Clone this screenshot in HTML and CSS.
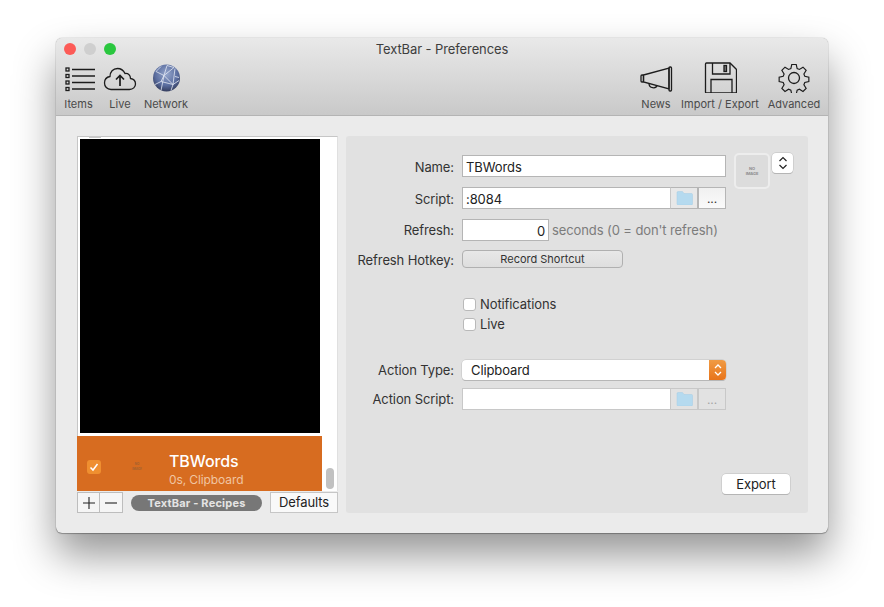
FILE: index.html
```html
<!DOCTYPE html>
<html lang="en">

<head>
  <meta charset="UTF-8">
  <title>TextBar - Preferences</title>
  <link rel="stylesheet" href="styles.css">
</head>

<body>
  <div class="window">
    <header class="toolbar">
      <div class="titlebar">
        <div class="lights">
          <span class="light light-red"></span>
          <span class="light light-grey"></span>
          <span class="light light-green"></span>
        </div>
        <div class="title">TextBar - Preferences</div>
      </div>
      <div class="tools">
        <div class="tool-group">
          <div class="tool tool-items">
            <svg width="32" height="32" viewBox="-1 -3.500 32 32" fill="none" stroke="#1c1c1c">
              <rect x="2" y="3.500" width="3" height="3" stroke-width="1.300" />
              <rect x="2" y="10" width="3" height="3" stroke-width="1.300" />
              <rect x="2" y="16.500" width="3" height="3" stroke-width="1.300" />
              <rect x="2" y="23" width="3" height="3" stroke-width="1.300" />
              <path d="M8 5h23M8 11.500h23M8 18h23M8 24.500h23" stroke-width="1.300" />
            </svg>
            <span>Items</span>
          </div>
          <div class="tool tool-live">
            <svg width="34" height="32" viewBox="0 -4 34 32" fill="none" stroke="#1c1c1c" stroke-width="1.300">
              <path d="M8 24.500h18.500c3.500 0 6-2.500 6-5.500 0-3-2-5-5-5.500 0-3.500-2.500-5.500-5.500-5-1.500-3-4-5-7.500-5-4.500 0-7.500 3.500-7.500 8-3 .5-5.500 3-5.500 6.500 0 3.500 2.500 6.500 6.500 6.500z" />
              <path d="M17 21v-10M13 14.500l4-4 4 4" stroke-width="1.700" />
            </svg>
            <span>Live</span>
          </div>
          <div class="tool tool-network">
            <svg width="28" height="32" viewBox="-1 -3.500 28 32" fill="none">
              <defs>
                <radialGradient id="globe" cx="0.5" cy="0.35" r="0.7">
                  <stop offset="0" stop-color="#95a6cc" />
                  <stop offset="0.6" stop-color="#5a6d9f" />
                  <stop offset="1" stop-color="#2c3350" />
                </radialGradient>
              </defs>
              <circle cx="13.500" cy="13.500" r="13.500" fill="url(#globe)" />
              <path d="M3 7l8 4 10-8M11 11l-3 15M11 11l9 9 6-4M2 20l6-3 12 3-2 6M8 17l3-6M20 20l2-16M11 11l3-10M21 3l-7-2M3 7l5-5M22 12l4 1" stroke="#e3e8f4" stroke-width="0.800" />
            </svg>
            <span>Network</span>
          </div>
        </div>
        <div class="tool-group">
          <div class="tool tool-news">
            <svg width="34" height="32" viewBox="-1 -4 34 32" fill="none" stroke="#1c1c1c" stroke-width="1.300">
              <path d="M3.500 10L29 3v21L3.500 17z" />
              <rect x="1" y="10" width="2.500" height="7" rx="1" />
              <rect x="29" y="2" width="2.500" height="24" rx="1" />
              <path d="M9 18.500c0 5 7 5.500 8 2" />
            </svg>
            <span>News</span>
          </div>
          <div class="tool tool-export">
            <svg width="34" height="32" viewBox="-1 -1 34 32" fill="none" stroke="#1c1c1c" stroke-width="1.300">
              <path d="M2.500 1h23.500l6.500 6.500v22.500c0 .5-.5 1-1 1h-29c-.5 0-1-.5-1-1v-28c0-.5.500-1 1-1z" />
              <path d="M8.500 1v11h17.500v-11M7 31v-13.500h21v13.500" />
              <rect x="20" y="3.500" width="2.500" height="6" fill="#777" />
            </svg>
            <span>Import / Export</span>
          </div>
          <div class="tool tool-advanced">
            <svg width="34" height="32" viewBox="0 -1 34 32" fill="none" stroke="#1c1c1c" stroke-width="1.300">
              <circle cx="17" cy="16" r="5.500" />
              <path d="M14.500 1h5l1 4.500 2.500 1 4-2.500 3.500 3.500-2.500 4 1 2.500 4.500 1v5l-4.500 1-1 2.500 2.500 4-3.500 3.500-4-2.500-2.500 1-1 4.500h-5l-1-4.500-2.500-1-4 2.500-3.500-3.500 2.500-4-1-2.500-4.500-1v-5l4.500-1 1-2.500-2.500-4 3.500-3.500 4 2.500 2.500-1z" transform="translate(1.700 1.600) scale(0.9)" />
            </svg>
            <span>Advanced</span>
          </div>
        </div>
      </div>
    </header>

    <main class="content">
      <section class="sidebar">
        <div class="list">
          <div class="list-rows">
            <div class="list-peek"></div>
            <div class="black-frame"></div>
            <div class="recipe">
              <span class="recipe-check">
                <svg width="10" height="9" viewBox="0 0 10 9" fill="none" stroke="#fff" stroke-width="1.500">
                  <path d="M1.500 4.500l2.500 2.500 4.500-6" />
                </svg>
              </span>
              <span class="recipe-image">NO<br>IMAGE</span>
              <div class="recipe-text">
                <div class="recipe-name">TBWords</div>
                <div class="recipe-sub">0s, Clipboard</div>
              </div>
            </div>
          </div>
          <div class="scroll-track"><span class="scroll-thumb"></span></div>
        </div>
        <div class="list-bar">
          <div class="plus-minus">
            <span class="pm-btn">
              <svg width="12" height="12" viewBox="0 0 12 12" stroke="#222" stroke-width="1.100"><path d="M6 0v12M0 6h12" /></svg>
            </span>
            <span class="pm-btn">
              <svg width="12" height="12" viewBox="0 0 12 12" stroke="#222" stroke-width="1.100"><path d="M0 6h12" /></svg>
            </span>
          </div>
          <span class="recipes-pill">TextBar - Recipes</span>
          <span class="defaults-btn">Defaults</span>
        </div>
      </section>

      <section class="panel">
        <div class="image-well">
          <span class="well-inner">NO<br>IMAGE</span>
        </div>
        <span class="image-stepper">
          <svg width="10" height="14" viewBox="0 0 10 14" fill="none" stroke="#222" stroke-width="1.200"><path d="M1.500 5l3.500-3.500 3.500 3.500M1.500 9l3.500 3.500 3.500-3.500" /></svg>
        </span>

        <div class="form">
          <label class="form-label row-name">Name:</label>
          <div class="field field-wide row-name">TBWords</div>

          <label class="form-label row-script">Script:</label>
          <div class="field-group row-script">
            <div class="field field-grow">:8084</div>
            <span class="addon">
              <svg class="folder" width="17" height="14" viewBox="0 0 17 14"><path d="M1 13V1.500C1 1 1.500.5 2 .5h4.500l1.500 2h7.500c.5 0 1 .5 1 1V13c0 .5-.5 1-1 1H2c-.5 0-1-.5-1-1z" fill="#b5daef" stroke="#a5cde4" stroke-width="0.500" /></svg>
            </span>
            <span class="addon addon-dots">...</span>
          </div>

          <label class="form-label row-refresh">Refresh:</label>
          <div class="refresh-line row-refresh">
            <div class="field field-number">0</div>
            <span class="hint">seconds (0 = don't refresh)</span>
          </div>

          <label class="form-label row-hotkey">Refresh Hotkey:</label>
          <div class="shortcut-btn row-hotkey">Record Shortcut</div>

          <div class="checks">
            <div class="check-line"><span class="check"></span>Notifications</div>
            <div class="check-line"><span class="check"></span>Live</div>
          </div>

          <label class="form-label row-action">Action Type:</label>
          <div class="select row-action">
            <span class="select-value">Clipboard</span>
            <span class="select-arrows">
              <svg width="10" height="14" viewBox="0 0 10 14" fill="none" stroke="#fff" stroke-width="1.300"><path d="M2 5l3-3 3 3M2 9l3 3 3-3" /></svg>
            </span>
          </div>

          <label class="form-label row-ascript">Action Script:</label>
          <div class="field-group field-group-off row-ascript">
            <div class="field field-grow"></div>
            <span class="addon">
              <svg class="folder" width="17" height="14" viewBox="0 0 17 14"><path d="M1 13V1.500C1 1 1.500.5 2 .5h4.500l1.500 2h7.500c.5 0 1 .5 1 1V13c0 .5-.5 1-1 1H2c-.5 0-1-.5-1-1z" fill="#b5daef" stroke="#a5cde4" stroke-width="0.500" /></svg>
            </span>
            <span class="addon addon-dots">...</span>
          </div>
        </div>

        <div class="panel-foot">
          <span class="export-btn">Export</span>
        </div>
      </section>
    </main>
  </div>
</body>

</html>
```

FILE: styles.css
```css
* {
  box-sizing: border-box;
}

html,
body {
  margin: 0;
  height: 607px;
  overflow: hidden;
  background: #ffffff;
}

body {
  padding: 38px 56px 0;
  font-family: Inter, Roboto, "Liberation Sans", sans-serif;
  font-size: 13px;
  letter-spacing: -0.1px;
  color: #2a2a2a;
}

.window {
  position: relative;
  width: 772px;
  height: 495px;
  display: flex;
  flex-direction: column;
  border-radius: 6px;
  background: #ebebeb;
  box-shadow: 0 0 1px rgba(0, 0, 0, 0.55), 0 1px 1px rgba(0, 0, 0, 0.25), 0 22px 42px rgba(0, 0, 0, 0.42);
}

/* Toolbar */
.toolbar {
  height: 78px;
  flex: none;
  border-radius: 6px 6px 0 0;
  border-bottom: 1px solid #b4b4b4;
  background: linear-gradient(#e9e9e9, #c9c9c9);
}

.titlebar {
  position: relative;
  height: 23px;
  display: flex;
  align-items: center;
  justify-content: center;
  padding-bottom: 2px;
}

.lights {
  position: absolute;
  left: 8px;
  top: 5px;
  display: flex;
  gap: 8px;
}

.light {
  width: 12px;
  height: 12px;
  border-radius: 50%;
}

.light-red {
  background: #fc5b57;
}

.light-grey {
  background: #cfcfcf;
}

.light-green {
  background: #2ac73f;
}

.title {
  font-size: 13px;
  color: #3e3e3e;
}

.tools {
  display: flex;
  justify-content: space-between;
  padding: 0 8px;
}

.tool-group {
  display: flex;
}

.tool {
  display: flex;
  flex-direction: column;
  align-items: center;
  font-size: 11px;
  letter-spacing: 0;
  color: #4a4a4a;
}

.tool svg {
  flex: none;
  margin-bottom: 5px;
}

.tool span {
  line-height: 13px;
}

.tool-items {
  width: 29px;
}

.tool-live {
  width: 34px;
  margin-left: 10px;
}

.tool-network {
  width: 46px;
  margin-left: 6px;
}

.tool-news {
  width: 34px;
}

.tool-export {
  width: 80px;
  margin-left: 7px;
}

.tool-advanced {
  width: 52px;
  margin-left: 8px;
}

/* Body of the window */
.content {
  flex: 1;
  display: flex;
  gap: 8px;
  padding: 20px 20px 20px 21px;
}

.sidebar {
  width: 261px;
  display: flex;
  flex-direction: column;
}

.list {
  position: relative;
  height: 355px;
  display: flex;
  background: #ffffff;
  border-top: 1px solid #c6c6c6;
  border-left: 1px solid #c6c6c6;
  border-right: 1px solid #e0e0e0;
}

.list-rows {
  width: 245px;
  display: flex;
  flex-direction: column;
}

.list-peek {
  position: absolute;
  left: 11px;
  top: -1px;
  width: 12px;
  height: 2px;
  background: #c9c9c9;
}

.black-frame {
  height: 294px;
  margin: 2px 3px 0 2px;
  background: #000000;
}

.recipe {
  margin: 3px 1px 0 -1px;
  height: 55px;
  display: flex;
  align-items: center;
  background: #d76c20;
  color: #ffffff;
}

.recipe-check {
  width: 14px;
  height: 14px;
  margin: 7px 0 0 10px;
  border-radius: 3px;
  display: flex;
  align-items: center;
  justify-content: center;
  background: #ef8f30;
}

.recipe-image {
  width: 18px;
  margin: 7px 0 0 27px;
  font-size: 3px;
  line-height: 5px;
  font-weight: 700;
  text-align: center;
  color: #a5622f;
}

.recipe-text {
  margin-left: 23px;
  padding-top: 13px;
}

.recipe-name {
  font-size: 16px;
  font-weight: 500;
  line-height: 20px;
}

.recipe-sub {
  font-size: 12px;
  line-height: 18px;
  color: #f0c5a2;
}

.scroll-track {
  flex: 1;
  position: relative;
}

.scroll-thumb {
  position: absolute;
  left: 3px;
  bottom: 2px;
  width: 8px;
  height: 21px;
  border-radius: 4px;
  background: #c1c1c1;
}

.list-bar {
  height: 22px;
  display: flex;
  align-items: flex-end;
}

.plus-minus {
  display: flex;
  height: 21px;
  border: 1px solid #bdbdbd;
  background: #f5f5f5;
}

.pm-btn {
  width: 21px;
  display: flex;
  align-items: center;
  justify-content: center;
}

.pm-btn + .pm-btn {
  width: 23px;
  border-left: 1px solid #bdbdbd;
}

.recipes-pill {
  width: 131px;
  height: 16px;
  margin: 0 0 2px 8px;
  border-radius: 8px;
  background: #777777;
  color: #e4e4e4;
  font-size: 11px;
  font-weight: 700;
  letter-spacing: 0.2px;
  line-height: 16px;
  text-align: center;
}

.defaults-btn {
  width: 68px;
  height: 21px;
  margin-left: auto;
  border: 1px solid #c6c6c6;
  background: #f9f9f9;
  color: #222222;
  line-height: 19px;
  text-align: center;
}

/* Right panel */
.panel {
  position: relative;
  flex: 1;
  display: flex;
  flex-direction: column;
  padding: 19px 17px 19px 10px;
  border-radius: 3px;
  background: #e1e1e1;
}

.form {
  display: grid;
  grid-template-columns: 98px 264px;
  column-gap: 8px;
  align-items: center;
}

.form-label {
  text-align: right;
  color: #333333;
}

/* these labels sit a pixel under the middle of their row */
.form-label.row-name,
.form-label.row-script,
.form-label.row-hotkey {
  height: 18px;
  line-height: 20px;
}

.row-script {
  margin-top: 10px;
}

.row-refresh {
  margin-top: 10px;
}

.row-hotkey {
  margin-top: 9px;
}

.row-action {
  margin-top: 28px;
}

.row-ascript {
  margin-top: 8px;
}

.field {
  height: 22px;
  padding: 0 3px;
  border: 1px solid #b5b5b5;
  background: #ffffff;
  color: #222222;
  line-height: 22px;
}

.field-group {
  display: flex;
  height: 22px;
}

.field-grow {
  flex: 1;
  border-right: none;
}

.addon {
  width: 28px;
  display: flex;
  align-items: center;
  justify-content: center;
  border: 1px solid #b5b5b5;
  border-left: 1px solid #c8c8c8;
  background: #e8e8e8;
}

.addon-dots {
  border-left: 1px solid #b5b5b5;
  background: linear-gradient(#f0f0f0, #fafafa);
  color: #333333;
  font-size: 12px;
}

.field-group-off .field,
.field-group-off .addon {
  border-color: #c8c8c8;
}

.field-group-off .addon {
  background: #e2e2e2;
}

.field-group-off .addon-dots {
  color: #a5a5a5;
}

.refresh-line {
  display: flex;
  align-items: center;
  gap: 3px;
}

.field-number {
  width: 87px;
  text-align: right;
}

.hint {
  color: #7c7c7c;
  white-space: nowrap;
}

.shortcut-btn {
  width: 161px;
  height: 18px;
  border: 1px solid #b0b0b0;
  border-radius: 4px;
  background: linear-gradient(#e8e8e8, #dedede);
  color: #333333;
  font-size: 11px;
  letter-spacing: 0;
  line-height: 16px;
  text-align: center;
}

.checks {
  grid-column: 2;
  display: flex;
  flex-direction: column;
  gap: 6px;
  margin-top: 29px;
  margin-bottom: 1px;
}

.check-line {
  display: flex;
  align-items: center;
  gap: 4px;
  height: 14px;
  padding-left: 1px;
  color: #333333;
}

.check {
  width: 13px;
  height: 13px;
  border: 1px solid #b9b9b9;
  border-radius: 3px;
  background: #ffffff;
}

.select {
  height: 20px;
  display: flex;
  align-items: center;
  justify-content: space-between;
  border-radius: 4px;
  background: #ffffff;
  box-shadow: 0 0 0 0.5px #c2c2c2, 0 1px 0 #acacac;
}

.select-value {
  padding-left: 9px;
  color: #222222;
}

.select-arrows {
  width: 17px;
  height: 20px;
  display: flex;
  align-items: center;
  justify-content: center;
  border-radius: 0 4px 4px 0;
  background: linear-gradient(#f09b44, #e8741a);
}

.panel-foot {
  margin-top: auto;
  display: flex;
  justify-content: flex-end;
}

.export-btn {
  width: 68px;
  height: 20px;
  margin-right: 1px;
  border-radius: 4px;
  background: #ffffff;
  box-shadow: 0 0 0 0.5px #bdbdbd, 0 1px 0 #adadad;
  color: #222222;
  line-height: 20px;
  text-align: center;
}

.image-well {
  position: absolute;
  left: 388px;
  top: 17px;
  width: 36px;
  height: 36px;
  padding: 2px;
  border-radius: 5px;
  background: #ededed;
}

.well-inner {
  display: block;
  height: 32px;
  padding-top: 11px;
  border-radius: 3px;
  background: #dcdcdc;
  color: #8c8c8c;
  font-size: 4px;
  font-weight: 700;
  line-height: 5px;
  text-align: center;
}

.image-stepper {
  position: absolute;
  left: 426px;
  top: 17px;
  width: 21px;
  height: 20px;
  display: flex;
  align-items: center;
  justify-content: center;
  border-radius: 4px;
  background: #ffffff;
  box-shadow: 0 0 0 0.5px #bdbdbd, 0 1px 0 #adadad;
}
```
